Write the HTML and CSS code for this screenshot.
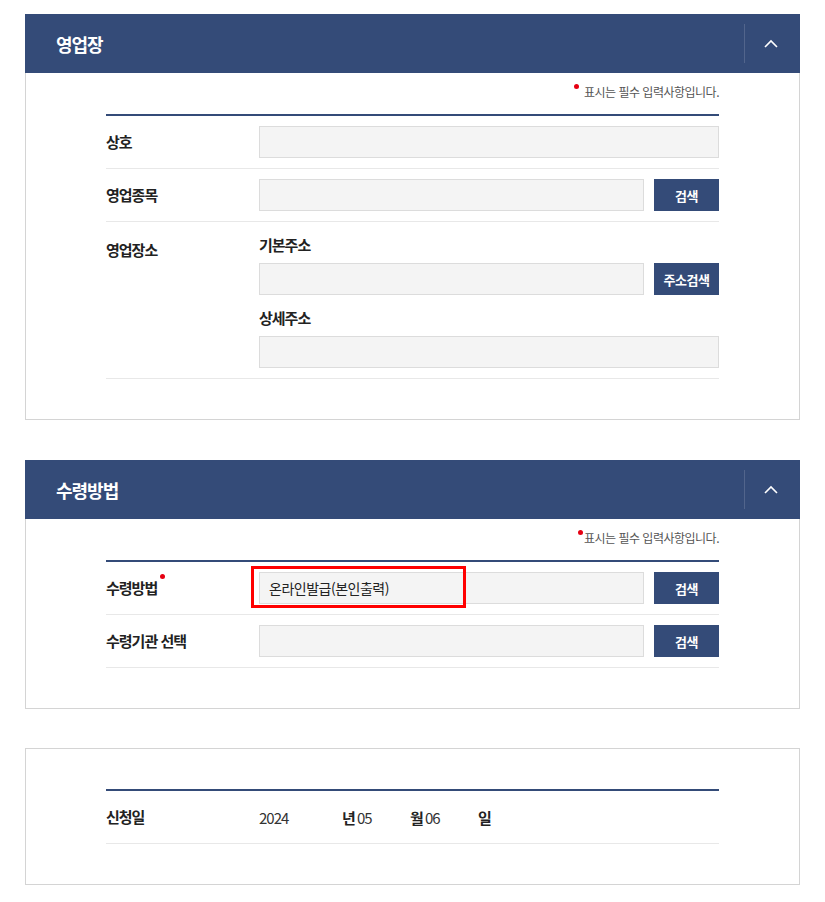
FILE: index.html
```html
<!DOCTYPE html>
<html lang="ko">
<head>
    <meta charset="UTF-8">
    <meta name="viewport" content="width=device-width, initial-scale=1.0">
    <title>신청서 작성</title>
    <link rel="stylesheet" href="styles.css">
</head>
<body>

    <div class="wrap">
        <!-- 영업장 -->
        <div class="panel">
            <div class="panel-head">
                <h2>영업장</h2>
                <button type="button" class="toggle">
                    <svg width="14" height="9" viewBox="0 0 14 9"><polyline points="1,8 7,2 13,8" fill="none" stroke="#fff" stroke-width="1.6"/></svg>
                </button>
            </div>
            <div class="panel-body">
                <p class="note"><span class="dot"></span>표시는 필수 입력사항입니다.</p>
                <div class="form">
                    <div class="row">
                        <div class="label">상호</div>
                        <div class="field"><input type="text" class="input"></div>
                    </div>
                    <div class="row">
                        <div class="label">영업종목</div>
                        <div class="field">
                            <input type="text" class="input">
                            <button type="button" class="btn">검색</button>
                        </div>
                    </div>
                    <div class="row row-top">
                        <div class="label">영업장소</div>
                        <div class="field-stack">
                            <div class="sub-label">기본주소</div>
                            <div class="field">
                                <input type="text" class="input">
                                <button type="button" class="btn">주소검색</button>
                            </div>
                            <div class="sub-label">상세주소</div>
                            <div class="field"><input type="text" class="input"></div>
                        </div>
                    </div>
                </div>
            </div>
        </div>

        <!-- 수령방법 -->
        <div class="panel">
            <div class="panel-head">
                <h2>수령방법</h2>
                <button type="button" class="toggle">
                    <svg width="14" height="9" viewBox="0 0 14 9"><polyline points="1,8 7,2 13,8" fill="none" stroke="#fff" stroke-width="1.6"/></svg>
                </button>
            </div>
            <div class="panel-body">
                <p class="note note-tight"><span class="dot"></span>표시는 필수 입력사항입니다.</p>
                <div class="form">
                    <div class="row">
                        <div class="label">수령방법<span class="req"></span></div>
                        <div class="field">
                            <div class="input-box">
                                <input type="text" class="input" value="온라인발급(본인출력)">
                                <span class="highlight"></span>
                            </div>
                            <button type="button" class="btn">검색</button>
                        </div>
                    </div>
                    <div class="row">
                        <div class="label">수령기관 선택</div>
                        <div class="field">
                            <input type="text" class="input">
                            <button type="button" class="btn">검색</button>
                        </div>
                    </div>
                </div>
            </div>
        </div>

        <!-- 신청일 -->
        <div class="panel panel-plain">
            <div class="panel-body">
                <div class="form">
                    <div class="row">
                        <div class="label">신청일</div>
                        <div class="date">
                            <span class="date-val year">2024</span><span class="date-unit">년</span>
                            <span class="date-val">05</span><span class="date-unit">월</span>
                            <span class="date-val">06</span><span class="date-unit">일</span>
                        </div>
                    </div>
                </div>
            </div>
        </div>
    </div>

</body>
</html>
```

FILE: styles.css
```css
body {
    font-family: "Noto Sans CJK KR", "Noto Sans", sans-serif;
    background-color: #fff;
    color: #222;
    margin: 0;
    padding: 0;
}

.wrap {
    padding: 14px 25px;
}

.panel {
    margin-bottom: 40px;
}

.panel-plain {
    margin-top: -1px;
}

.panel-head {
    display: flex;
    align-items: center;
    height: 59px;
    background-color: #344b78;
    padding-left: 31px;
}

.panel-head h2 {
    flex: 1;
    margin: 0;
    color: #fff;
    font-size: 18px;
    font-weight: 700;
    letter-spacing: -1px;
}

.toggle {
    width: 56px;
    height: 39px;
    background: none;
    border: none;
    border-left: 1px solid rgba(255, 255, 255, 0.15);
    padding: 0 4px 0 0;
    cursor: pointer;
    display: flex;
    align-items: center;
    justify-content: center;
}

.panel-body {
    border: 1px solid #d4d4d4;
    border-top: none;
    padding: 9px 80px 40px;
}

.panel-plain .panel-body {
    border-top: 1px solid #d4d4d4;
    padding-top: 40px;
}

.note {
    margin: 0 0 12px;
    text-align: right;
    font-size: 12px;
    line-height: 20px;
    letter-spacing: -0.5px;
    color: #555;
}

.dot {
    display: inline-block;
    width: 5px;
    height: 5px;
    border-radius: 50%;
    background-color: #e60012;
    vertical-align: top;
    margin-top: 2px;
    margin-right: 5px;
}

.note-tight .dot {
    margin-right: 1px;
}

.form {
    border-top: 2px solid #344b78;
}

.row {
    display: flex;
    align-items: center;
    padding: 10px 0;
    border-bottom: 1px solid #e8e8e8;
}

.row-top {
    align-items: flex-start;
    padding-top: 13px;
}

.row-top .label {
    padding-top: 5px;
}

.label {
    width: 153px;
    flex-shrink: 0;
    font-size: 15px;
    font-weight: 700;
    letter-spacing: -1px;
    color: #222;
    line-height: 20px;
}

.req {
    display: inline-block;
    width: 5px;
    height: 5px;
    border-radius: 50%;
    background-color: #e60012;
    vertical-align: top;
    margin-left: 3px;
    margin-top: -4px;
}

.field {
    flex: 1;
    display: flex;
    gap: 10px;
}

.field-stack {
    flex: 1;
}

.sub-label {
    font-size: 15px;
    font-weight: 700;
    letter-spacing: -1px;
    color: #222;
    line-height: 20px;
    margin-bottom: 8px;
}

.field + .sub-label {
    margin-top: 13px;
}

.input {
    flex: 1;
    min-width: 0;
    height: 32px;
    box-sizing: border-box;
    border: 1px solid #dcdcdc;
    background-color: #f4f4f4;
    padding: 0 9px;
    font-family: inherit;
    font-size: 14px;
    letter-spacing: -0.5px;
    color: #222;
}

.input-box {
    flex: 1;
    display: flex;
    position: relative;
}

.highlight {
    position: absolute;
    left: -8px;
    top: -6px;
    width: 215px;
    height: 42px;
    box-sizing: border-box;
    border: 3px solid #f00;
}

.btn {
    width: 65px;
    height: 32px;
    flex-shrink: 0;
    background-color: #344b78;
    color: #fff;
    border: none;
    padding: 0;
    font-family: inherit;
    font-size: 13px;
    font-weight: 700;
    letter-spacing: -0.5px;
    cursor: pointer;
}

.date {
    display: flex;
    align-items: center;
    height: 32px;
    font-size: 15px;
    letter-spacing: -1px;
}

.date-val {
    width: 53px;
    color: #333;
}

.date-val.year {
    width: 83px;
}

.date-unit {
    width: 15px;
    font-weight: 700;
}
```
